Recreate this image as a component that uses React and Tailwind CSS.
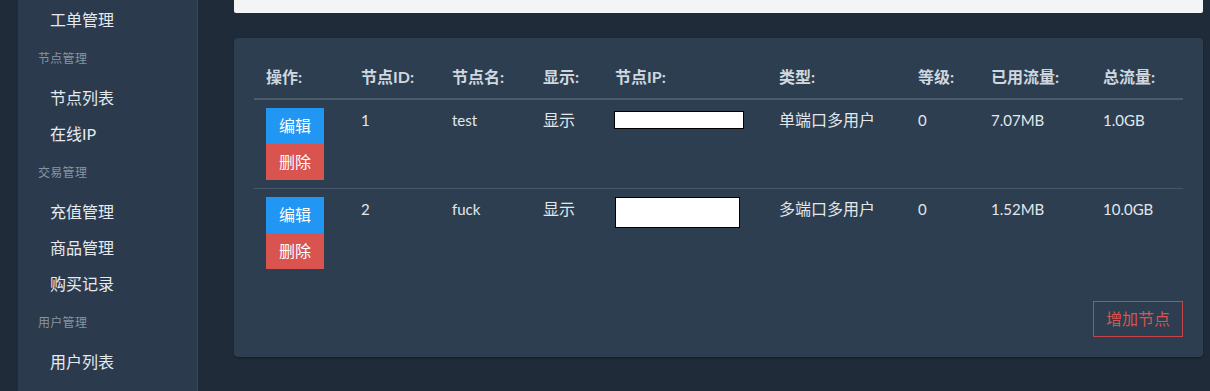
import React from 'react'

const nav = [
  { type: 'item', label: '工单管理' },
  { type: 'head', label: '节点管理' },
  { type: 'item', label: '节点列表' },
  { type: 'item', label: '在线IP' },
  { type: 'head', label: '交易管理' },
  { type: 'item', label: '充值管理' },
  { type: 'item', label: '商品管理' },
  { type: 'item', label: '购买记录' },
  { type: 'head', label: '用户管理' },
  { type: 'item', label: '用户列表' },
]

const columns = ['操作:', '节点ID:', '节点名:', '显示:', '节点IP:', '类型:', '等级:', '已用流量:', '总流量:']

const nodes = [
  { id: 1, name: 'test', show: '显示', type: '单端口多用户', level: 0, used: '7.07MB', total: '1.0GB', ipBox: 'w-[130px] h-[18px] mt-[3px]' },
  { id: 2, name: 'fuck', show: '显示', type: '多端口多用户', level: 0, used: '1.52MB', total: '10.0GB', ipBox: 'w-[125px] h-[31px] ml-px' },
]

const grid = 'grid grid-cols-[95px_91px_91px_72px_164px_139px_73px_112px_92px]'

export default function App() {
  return (
    <div
      className="flex w-[1210px] h-[391px] overflow-hidden bg-[#1f2b38]"
      style={{ fontFamily: 'Lato, "Noto Sans CJK SC", sans-serif' }}
    >
      <div className="w-[18px] shrink-0" />

      {/* Sidebar */}
      <div className="w-[180px] shrink-0 bg-[#2b3b4d] border-r border-[#33465a] pt-[2px]">
        {nav.map((n, i) =>
          n.type === 'head' ? (
            <div key={i} className="h-[42px] flex items-center pl-[20px] text-[12px] text-[#8795a3] tracking-wide">
              {n.label}
            </div>
          ) : (
            <div key={i} className="h-[36px] flex items-center pl-[32px] text-[16px] text-[#e6eaee]">
              {n.label}
            </div>
          )
        )}
      </div>

      {/* Main */}
      <div className="ml-[36px] w-[969px] shrink-0">
        <div className="h-[13px] bg-[#f3f4f5] rounded-b-[2px]" />

        <div className="mt-[25px] h-[319px] bg-[#2c3e50] rounded-[4px] shadow-[0_1px_2px_rgba(0,0,0,0.35)] px-[20px] pt-[20px]">
          {/* Header */}
          <div className={`${grid} h-[42px] pb-[3px] border-b-2 border-[#4a5b6b]`}>
            {columns.map((c) => (
              <div key={c} className="pl-[12px] flex items-center text-[16px] font-bold text-[#cfd7df]">
                {c}
              </div>
            ))}
          </div>

          {/* Rows */}
          {nodes.map((n, i) => (
            <div
              key={n.id}
              className={`${grid} py-[8px] text-[15px] text-[#e3e7eb] ${i === 0 ? 'border-b border-[#46576a]' : ''}`}
            >
              <div className="pl-[12px] flex flex-col">
                <button className="w-[58px] h-[36px] bg-[#2196f3] text-white text-[16px]">编辑</button>
                <button className="w-[58px] h-[36px] bg-[#d9534f] text-white text-[16px]">删除</button>
              </div>
              <div className="pl-[12px] leading-[24px]">{n.id}</div>
              <div className="pl-[12px] leading-[24px]">{n.name}</div>
              <div className="pl-[12px] leading-[24px] text-[16px]">{n.show}</div>
              <div className="pl-[11px]">
                <div className={`${n.ipBox} bg-white border border-black`} />
              </div>
              <div className="pl-[12px] leading-[24px] text-[16px]">{n.type}</div>
              <div className="pl-[12px] leading-[24px]">{n.level}</div>
              <div className="pl-[12px] leading-[24px]">{n.used}</div>
              <div className="pl-[12px] leading-[24px]">{n.total}</div>
            </div>
          ))}

          <div className="flex justify-end mt-[24px]">
            <button className="w-[90px] h-[36px] border border-[#c7434a] text-[#d9534f] text-[16px]">增加节点</button>
          </div>
        </div>
      </div>
    </div>
  )
}
